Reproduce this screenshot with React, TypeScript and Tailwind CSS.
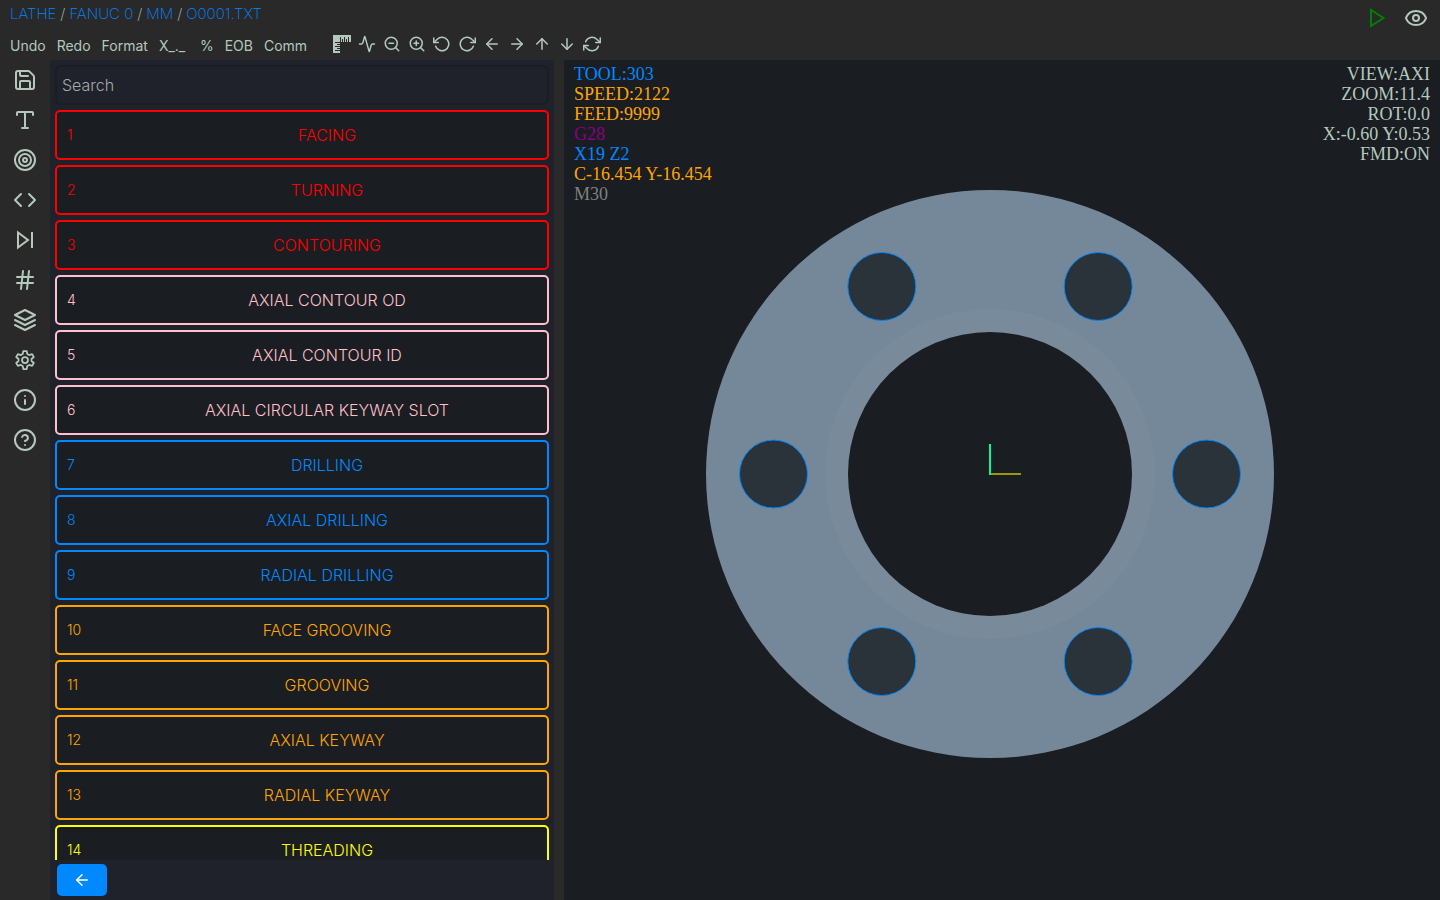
import {
  Activity, ArrowDown, ArrowLeft, ArrowRight, ArrowUp, CircleHelp, Code, Eye, Hash, Info,
  Save, Target, Type, ZoomIn, ZoomOut,
} from "lucide-react";
import { FiLayers, FiRefreshCw, FiRotateCcw, FiRotateCw } from "react-icons/fi";
import type { ReactNode } from "react";

const crumbs = ["LATHE", "FANUC 0", "MM", "O0001.TXT"];
const textActions = ["Undo", "Redo", "Format", "X_._", "%", "EOB", "Comm"];

function StepIcon() {
  return (
    <svg width="24" height="24" viewBox="0 0 24 24" fill="none" stroke="currentColor" strokeWidth="2" strokeLinejoin="miter">
      <path d="M5 4.5v15l10-7.5z" />
      <path d="M19 4v16" />
    </svg>
  );
}

function GearIcon() {
  return (
    <svg width="24" height="24" viewBox="0 0 24 24" fill="none" stroke="currentColor" strokeWidth="1.75" strokeLinejoin="round">
      <path d="M10.300 3h3.400l.6 3 1.900 1.100 2.900-1 1.700 2.900-2.300 2v2l2.300 2-1.700 2.900-2.900-1-1.900 1.100-.6 3h-3.400l-.6-3-1.900-1.100-2.900 1L3.200 15l2.300-2v-2L3.200 9l1.700-2.900 2.900 1L9.700 6z" />
      <circle cx="12" cy="12" r="3" />
    </svg>
  );
}

function RulerIcon() {
  return (
    <svg width="18" height="18" viewBox="0 0 18 18" stroke="#292929" strokeWidth="1">
      <path d="M0 0h18v7H7v11H0z" fill="#b4c8be" stroke="none" />
      <path d="M7.500 7V2M9.500 7V4M11.500 7V2M13.500 7V4M15.500 7V2M7 7.500H2M7 9.500H4M7 11.500H2M7 13.500H4M7 15.500H2" />
    </svg>
  );
}

const viewActions: { name: string; icon: ReactNode }[] = [
  { name: "Measure", icon: <RulerIcon /> },
  { name: "Activity", icon: <Activity size={18} /> },
  { name: "Zoom out", icon: <ZoomOut size={18} /> },
  { name: "Zoom in", icon: <ZoomIn size={18} /> },
  { name: "Rotate left", icon: <FiRotateCcw size={18} /> },
  { name: "Rotate right", icon: <FiRotateCw size={18} /> },
  { name: "Move left", icon: <ArrowLeft size={18} /> },
  { name: "Move right", icon: <ArrowRight size={18} /> },
  { name: "Move up", icon: <ArrowUp size={18} /> },
  { name: "Move down", icon: <ArrowDown size={18} /> },
  { name: "Refresh", icon: <FiRefreshCw size={18} /> },
];

const sideActions: { name: string; icon: ReactNode }[] = [
  { name: "Save", icon: <Save size={24} /> },
  { name: "Text", icon: <Type size={24} /> },
  { name: "Target", icon: <Target size={24} /> },
  { name: "Code", icon: <Code size={24} /> },
  { name: "Step", icon: <StepIcon /> },
  { name: "Numbering", icon: <Hash size={24} /> },
  { name: "Layers", icon: <FiLayers size={24} /> },
  { name: "Settings", icon: <GearIcon /> },
  { name: "Info", icon: <Info size={24} /> },
  { name: "Help", icon: <CircleHelp size={24} /> },
];

const red = "border-[#ff0000] text-[#ff0000]";
const pink = "border-[#ffc0cb] text-[#ffc0cb]";
const blue = "border-[#0088ff] text-[#0088ff]";
const orange = "border-[#ffa500] text-[#ffa500]";
const yellow = "border-[#ffff00] text-[#ffff00]";

const cycles = [
  { label: "FACING", tone: red },
  { label: "TURNING", tone: red },
  { label: "CONTOURING", tone: red },
  { label: "AXIAL CONTOUR OD", tone: pink },
  { label: "AXIAL CONTOUR ID", tone: pink },
  { label: "AXIAL CIRCULAR KEYWAY SLOT", tone: pink },
  { label: "DRILLING", tone: blue },
  { label: "AXIAL DRILLING", tone: blue },
  { label: "RADIAL DRILLING", tone: blue },
  { label: "FACE GROOVING", tone: orange },
  { label: "GROOVING", tone: orange },
  { label: "AXIAL KEYWAY", tone: orange },
  { label: "RADIAL KEYWAY", tone: orange },
  { label: "THREADING", tone: yellow },
];

const program = [
  { text: "TOOL:303", tone: "text-[#0088ff]" },
  { text: "SPEED:2122", tone: "text-[#ffa500]" },
  { text: "FEED:9999", tone: "text-[#ffa500]" },
  { text: "G28", tone: "text-[#8a0085]" },
  { text: "X19 Z2", tone: "text-[#0088ff]" },
  { text: "C-16.454 Y-16.454", tone: "text-[#ffa500]" },
  { text: "M30", tone: "text-[#808080]" },
];
const viewState = ["VIEW:AXI", "ZOOM:11.4", "ROT:0.0", "X:-0.60 Y:0.53", "FMD:ON"];

const holes = [
  [500.5, 284], [392.2, 471.5], [175.8, 471.5], [67.5, 284], [175.8, 96.5], [392.2, 96.5],
];

function Flange() {
  return (
    <svg width="568" height="568" viewBox="0 0 568 568" role="img" aria-label="Axial view of the part">
      <circle cx="284" cy="284" r="284" fill="#758899" />
      <circle cx="284" cy="284" r="165" fill="#798b9b" />
      <circle cx="284" cy="284" r="142" fill="#1a1d21" />
      {holes.map(([x, y]) => (
        <circle key={`${x}-${y}`} cx={x} cy={y} r="34" fill="#2a333a" stroke="#0088ff" />
      ))}
      <path d="M284 284h31" stroke="#999900" strokeWidth="2" />
      <path d="M284 285V254" stroke="#00fa9a" strokeWidth="2" />
    </svg>
  );
}

export default function App() {
  return (
    <div className="flex h-screen flex-col overflow-hidden bg-[#292929] font-['Inter',sans-serif] text-[#b4c8be]">
      <header className="flex h-[60px] shrink-0 justify-between">
        <div className="flex flex-col">
          <nav aria-label="Program" className="flex h-7 items-center gap-1 px-2.5 text-[15px] font-extralight">
            {crumbs.map((crumb, i) => (
              <span key={crumb} className="flex gap-1">
                {i > 0 && <span>/</span>}
                <a href="#" className="text-[#0088ff]">{crumb}</a>
              </span>
            ))}
          </nav>
          <div className="flex h-8 items-center">
            <div className="flex gap-[11px] pt-1 pl-2.5 text-sm">
              {textActions.map((name) => (
                <button key={name} type="button" className={name === "X_._" ? "w-[30px] text-left" : ""}>{name}</button>
              ))}
            </div>
            <div className="flex pl-[22px]">
              {viewActions.map(({ name, icon }) => (
                <button key={name} type="button" aria-label={name} className="flex w-[25px] justify-center">{icon}</button>
              ))}
            </div>
          </div>
        </div>
        <div className="flex h-9 items-center gap-4 pr-3">
          <button type="button" aria-label="Run" className="text-[#008000]">
            <svg width="22" height="22" viewBox="0 0 22 22" fill="none" stroke="currentColor" strokeWidth="2">
              <path d="M5 3v16l12.500-8z" />
            </svg>
          </button>
          <button type="button" aria-label="View"><Eye size={24} /></button>
        </div>
      </header>

      <div className="flex min-h-0 flex-1">
        <nav aria-label="Tools" className="flex w-[50px] shrink-0 flex-col">
          {sideActions.map(({ name, icon }) => (
            <button key={name} type="button" aria-label={name} className="flex h-10 items-center justify-center">{icon}</button>
          ))}
        </nav>

        <section aria-label="Cycles" className="flex w-[35%] shrink-0 flex-col bg-[#1f222a]">
          <div className="px-[5px] pt-[5px]">
            <input
              type="search"
              aria-label="Search"
              placeholder="Search"
              className="h-10 w-full rounded-md border-2 border-[#1a1d21] bg-transparent px-[5px] text-base font-light placeholder:text-[#a9a9a9]"
            />
          </div>
          <ol className="flex min-h-0 flex-1 flex-col gap-[5px] overflow-hidden px-[5px] pt-[5px]">
            {cycles.map(({ label, tone }, i) => (
              <li key={label} className="shrink-0">
                <button type="button" className={`flex h-[50px] w-full items-center rounded-[5px] border-2 bg-[#1a1d21] px-2.5 font-light ${tone}`}>
                  <span className="w-[50px] shrink-0 text-left text-sm">{i + 1}</span>
                  <span className="flex-1">{label}</span>
                </button>
              </li>
            ))}
          </ol>
          <div className="flex h-10 shrink-0 items-center px-[7px]">
            <button type="button" aria-label="Back" className="flex h-8 w-[50px] items-center justify-center rounded-[5px] bg-[#0088ff] text-white">
              <ArrowLeft size={18} />
            </button>
          </div>
        </section>

        <main className="relative ml-2.5 flex min-w-0 flex-1 items-start justify-center overflow-hidden bg-[#1a1d21] pt-[130px] pr-6 font-['Liberation_Serif',serif] text-lg leading-5">
          <div className="absolute top-1 left-2.5">
            {program.map(({ text, tone }) => (
              <p key={text} className={tone}>{text}</p>
            ))}
          </div>
          <div className="absolute top-1 right-2.5 text-right">
            {viewState.map((text) => (
              <p key={text}>{text}</p>
            ))}
          </div>
          <Flange />
        </main>
      </div>
    </div>
  );
}
